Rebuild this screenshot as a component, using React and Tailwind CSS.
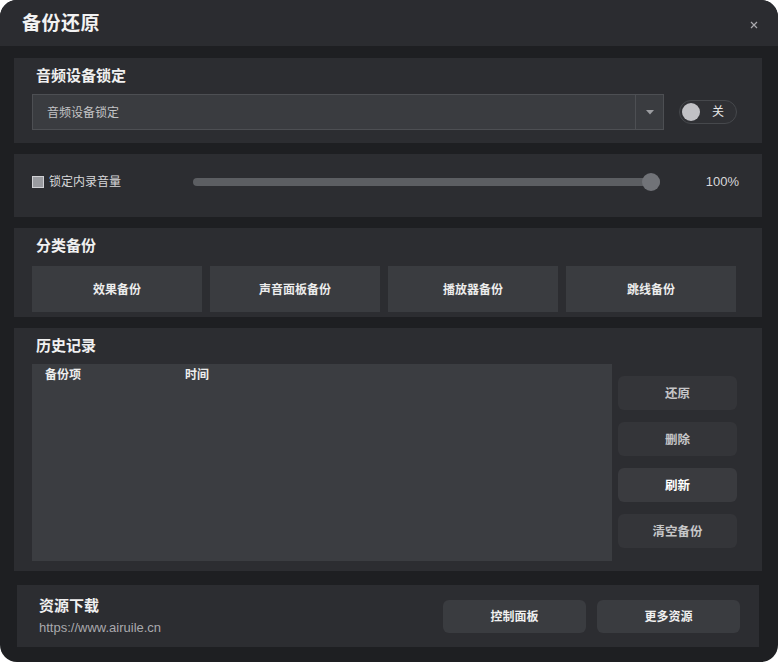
import React from "react";

function Section({ className = "", children }) {
  return <div className={"bg-[#2c2d31] " + className}>{children}</div>;
}

export default function App() {
  const cats = ["效果备份", "声音面板备份", "播放器备份", "跳线备份"];
  const side = [
    { t: "还原", hi: false },
    { t: "删除", hi: false },
    { t: "刷新", hi: true },
    { t: "清空备份", hi: false },
  ];
  return (
    <div className="w-[779px] h-[663px] bg-white font-['Liberation_Sans','Noto_Sans_CJK_SC',sans-serif]">
      <div className="w-[778px] h-[662px] rounded-[17px] overflow-hidden bg-[#1e1f22] flex flex-col">
        {/* header */}
        <div className="h-[46px] shrink-0 bg-[#2b2c30] flex items-center justify-between pl-[22px] pr-[20px]">
          <div className="text-[19px] font-bold text-[#f2f2f2] leading-none tracking-[0.5px]">备份还原</div>
          <svg width="8" height="8" viewBox="0 0 8 8" className="mt-[3px]">
            <path d="M1 1L7 7M7 1L1 7" stroke="#a9a9ad" strokeWidth="1.2" />
          </svg>
        </div>

        <div className="flex-1 flex flex-col pt-[12px] pl-[14px] pr-[16px] pb-[15px]">
          {/* section 1 */}
          <Section className="h-[85px] pt-[8px] pl-[18px] pr-[25px]">
            <div className="ml-[4px] h-[20px] flex items-center text-[15px] font-bold text-[#f0f0f0]">音频设备锁定</div>
            <div className="mt-[8px] flex items-center">
              <div className="w-[632px] h-[36px] bg-[#3a3c40] border border-[#4d4f53] flex items-center">
                <div className="flex-1 pl-[14px] pt-[1px] text-[12px] text-[#c4c4c6]">音频设备锁定</div>
                <div className="w-[28px] h-full border-l border-[#4d4f53] flex items-center justify-center">
                  <svg width="8" height="5" viewBox="0 0 8 5">
                    <path d="M0 0H8L4 4.5Z" fill="#9c9da1" />
                  </svg>
                </div>
              </div>
              <div className="ml-auto w-[58px] h-[24px] rounded-full bg-[#2f3034] border border-[#46484c] flex items-center pl-[2px]">
                <div className="w-[18px] h-[18px] rounded-full bg-[#c1c1c5]" />
                <div className="ml-[12px] text-[12px] text-[#e6e6e6] leading-none">关</div>
              </div>
            </div>
          </Section>

          {/* section 2 */}
          <Section className="mt-[11px] h-[63px] pl-[18px] pr-[23px] pb-[7px] flex items-center">
            <div className="w-[12px] h-[12px] bg-[#9a9ba0] border border-[#d0d0d4]" />
            <div className="ml-[5px] text-[12px] text-[#d8d8da]">锁定内录音量</div>
            <div className="ml-[72px] relative w-[467px] h-[18px] flex items-center">
              <div className="w-full h-[8px] rounded-full bg-[#5c5e62]" />
              <div className="absolute right-0 top-0 w-[18px] h-[18px] rounded-full bg-[#717378]" />
            </div>
            <div className="ml-auto text-[13px] text-[#d8d8da]">100%</div>
          </Section>

          {/* section 3 */}
          <Section className="mt-[11px] h-[89px] pt-[8px] pl-[18px] pr-[26px]">
            <div className="ml-[4px] h-[20px] flex items-center text-[15px] font-bold text-[#f0f0f0]">分类备份</div>
            <div className="mt-[10px] flex gap-[8px]">
              {cats.map((c) => (
                <div key={c} className="w-[170px] h-[46px] pt-[1px] bg-[#3a3c40] flex items-center justify-center text-[12px] font-bold text-[#ececec]">
                  {c}
                </div>
              ))}
            </div>
          </Section>

          {/* section 4 */}
          <Section className="mt-[11px] h-[243px] pt-[8px] pl-[18px] pr-[25px]">
            <div className="ml-[4px] h-[20px] flex items-center text-[15px] font-bold text-[#f0f0f0]">历史记录</div>
            <div className="mt-[8px] flex">
              <div className="w-[580px] h-[197px] bg-[#3b3d41] relative">
                <div className="flex h-[20px] items-center text-[12px] font-bold text-[#ededed] mt-[1px]">
                  <div className="pl-[13px] w-[153px]">备份项</div>
                  <div>时间</div>
                </div>
              </div>
              <div className="ml-[6px] pt-[12px] flex flex-col gap-[12px]">
                {side.map((b) => (
                  <div
                    key={b.t}
                    className={
                      "w-[119px] h-[34px] pt-[2px] rounded-[6px] flex items-center justify-center text-[12.5px] font-bold " +
                      (b.hi ? "bg-[#3a3b3f] text-[#ffffff]" : "bg-[#343539] text-[#c6c6c8]")
                    }
                  >
                    {b.t}
                  </div>
                ))}
              </div>
            </div>
          </Section>

          {/* section 5 */}
          <Section className="mt-[14px] mx-[3px] h-[62px] pl-[22px] pr-[19px] flex items-center">
            <div className="flex flex-col">
              <div className="h-[20px] flex items-center text-[15px] font-bold text-[#f0f0f0]">资源下载</div>
              <div className="mt-[4px] text-[13px] text-[#a9a9ad] leading-[16px]">https://www.airuile.cn</div>
            </div>
            <div className="ml-auto flex gap-[11px]">
              <div className="w-[143px] h-[33px] pt-[1px] rounded-[6px] bg-[#3a3c40] flex items-center justify-center text-[12px] font-bold text-[#f0f0f0]">控制面板</div>
              <div className="w-[143px] h-[33px] pt-[1px] rounded-[6px] bg-[#3a3c40] flex items-center justify-center text-[12px] font-bold text-[#f0f0f0]">更多资源</div>
            </div>
          </Section>
        </div>
      </div>
    </div>
  );
}
